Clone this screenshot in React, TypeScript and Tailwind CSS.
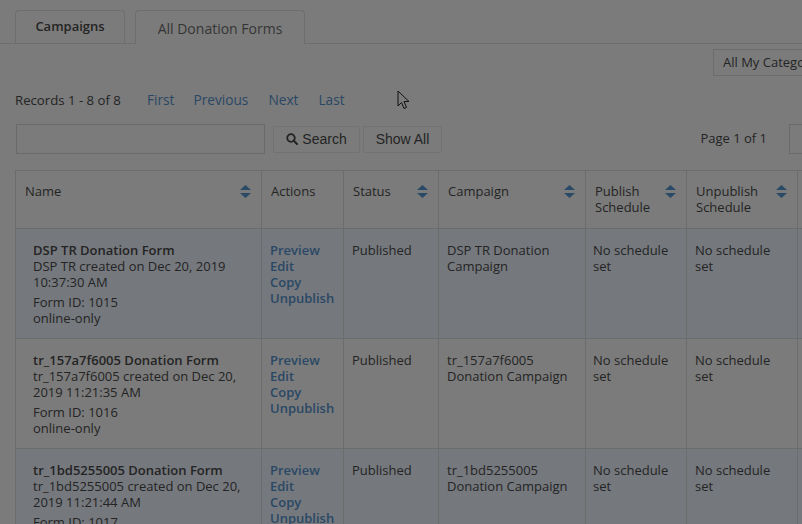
import React from "react";

const SortIcon = () => (
  <svg width="11" height="13" viewBox="0 0 11 13" className="shrink-0">
    <path d="M5.5 0 L11 5 L0 5 Z" fill="#2b4a68" />
    <path d="M0 8 L11 8 L5.5 13 Z" fill="#2b4a68" />
  </svg>
);

type Row = {
  title: string;
  created: string;
  formId: string;
  status: string;
  campaign: string;
  striped: boolean;
};

const rows: Row[] = [
  {
    title: "DSP TR Donation Form",
    created: "DSP TR created on Dec 20, 2019 10:37:30 AM",
    formId: "1015",
    status: "Published",
    campaign: "DSP TR Donation Campaign",
    striped: true,
  },
  {
    title: "tr_157a7f6005 Donation Form",
    created: "tr_157a7f6005 created on Dec 20, 2019 11:21:35 AM",
    formId: "1016",
    status: "Published",
    campaign: "tr_157a7f6005 Donation Campaign",
    striped: false,
  },
  {
    title: "tr_1bd5255005 Donation Form",
    created: "tr_1bd5255005 created on Dec 20, 2019 11:21:44 AM",
    formId: "1017",
    status: "Published",
    campaign: "tr_1bd5255005 Donation Campaign",
    striped: true,
  },
];

const HeadCell = ({
  label,
  sort,
  w,
  last,
}: {
  label: React.ReactNode;
  sort?: boolean;
  w: string;
  last?: boolean;
}) => (
  <th
    className={`${w} ${last ? "" : "border-r"} border-[#6c6c6c] align-top text-left font-normal px-[9px] pt-[12px] h-[58px]`}
  >
    <div className="flex items-start justify-between">
      <span className="leading-[16px]">{label}</span>
      {sort && (
        <span className="pt-[2px] pr-[1px]">
          <SortIcon />
        </span>
      )}
    </div>
  </th>
);

export default function App() {
  return (
    <div
      className="relative w-[802px] h-[524px] overflow-hidden bg-[#7b7b7b] text-[#242424] text-[13px]"
      style={{ fontFamily: '"Open Sans", "Liberation Sans", sans-serif' }}
    >
      {/* Tabs */}
      <div className="pt-[10px] pl-[15px] flex items-end border-b border-[#6e6e6e]">
        <div className="w-[110px] h-[33px] flex items-center justify-center border border-b-0 border-[#6e6e6e] rounded-t-[4px] font-semibold text-[13px] text-[#242424]">
          Campaigns
        </div>
        <div className="ml-[10px] w-[170px] h-[34px] -mb-px flex items-center justify-center border border-b-0 border-[#6e6e6e] rounded-t-[4px] bg-[#7b7b7b] text-[14px] text-[#353535] pt-[2px]">
          All Donation Forms
        </div>
      </div>

      {/* Category select */}
      <div className="flex justify-end mt-[5px]">
        <div className="w-[100px] -mr-[11px] h-[27px] border border-[#6c6c6c] flex items-center pl-[9px] pt-px text-[13px] whitespace-nowrap overflow-hidden">
          All My Categories
        </div>
      </div>

      {/* Records row */}
      <div className="flex items-center pl-[15px] mt-[14px] h-[20px] leading-[16px]">
        <span className="text-[13.2px]">Records 1 - 8 of 8</span>
        <span className="ml-[26px] text-[13.7px] text-[#2a4865]">First</span>
        <span className="ml-[19px] text-[13.7px] text-[#2a4865]">Previous</span>
        <span className="ml-[20px] text-[13.7px] text-[#2a4865]">Next</span>
        <span className="ml-[20px] text-[13.7px] text-[#2a4865]">Last</span>
      </div>

      {/* Search row */}
      <div className="flex items-center pl-[16px] mt-[14px] h-[30px]">
        <div className="w-[249px] h-[30px] border border-[#6a6a6a]" />
        <div
          className="ml-[8px] w-[87px] h-[27px] border border-[#727272] rounded-[2px] flex items-center justify-center gap-[4px] text-[14px] text-[#242424]"
          style={{ fontFamily: '"Liberation Sans", Arial, sans-serif' }}
        >
          <svg width="12" height="12" viewBox="0 0 12 12">
            <circle cx="5" cy="5" r="3.8" fill="none" stroke="#242424" strokeWidth="1.8" />
            <path d="M7.8 7.8 L11 11" stroke="#242424" strokeWidth="2" strokeLinecap="round" />
          </svg>
          Search
        </div>
        <div
          className="ml-[3px] w-[79px] h-[27px] border border-[#727272] rounded-[2px] flex items-center justify-center text-[14px] text-[#242424]"
          style={{ fontFamily: '"Liberation Sans", Arial, sans-serif' }}
        >
          Show All
        </div>
        <div className="flex-1" />
        <span className="text-[13px]">Page 1 of 1</span>
        <div className="ml-[22px] w-[13px] h-[30px] border border-[#6a6a6a] border-r-0 shrink-0" />
      </div>

      {/* Table */}
      <div className="pl-[15px] mt-[16px]">
        <table className="border-collapse table-fixed w-[900px] border-t border-l border-[#6c6c6c] leading-[16px]">
          <thead>
            <tr className="border-b border-[#6c6c6c]">
              <HeadCell label="Name" sort w="w-[246px]" />
              <HeadCell label="Actions" w="w-[82px]" />
              <HeadCell label="Status" sort w="w-[95px]" />
              <HeadCell label="Campaign" sort w="w-[147px]" />
              <HeadCell label={<>Publish<br />Schedule</>} sort w="w-[101px]" />
              <HeadCell label={<>Unpublish<br />Schedule</>} sort w="w-[111px]" />
              <HeadCell label="" w="w-[118px]" last />
            </tr>
          </thead>
          <tbody>
            {rows.map((r, i) => (
              <tr key={i} className={`${r.striped ? "bg-[#75787d]" : ""} border-b border-[#6c6c6c]`}>
                <td className="border-r border-[#6c6c6c] align-top h-[110px] pl-[17px] pr-[14px] pt-[13px]">
                  <div className="font-semibold">{r.title}</div>
                  <div>{r.created}</div>
                  <div className="mt-[4px]">Form ID: {r.formId}</div>
                  <div>online-only</div>
                </td>
                <td className="border-r border-[#6c6c6c] align-top px-[8px] pt-[13px] font-semibold text-[#2a4865]">
                  <div>Preview</div>
                  <div>Edit</div>
                  <div>Copy</div>
                  <div>Unpublish</div>
                </td>
                <td className="border-r border-[#6c6c6c] align-top px-[8px] pt-[13px]">{r.status}</td>
                <td className="border-r border-[#6c6c6c] align-top px-[8px] pt-[13px]">{r.campaign}</td>
                <td className="border-r border-[#6c6c6c] align-top px-[7px] pt-[13px]">No schedule set</td>
                <td className="border-r border-[#6c6c6c] align-top px-[8px] pt-[13px]">No schedule set</td>
                <td className="align-top px-[9px] pt-[13px]"></td>
              </tr>
            ))}
          </tbody>
        </table>
      </div>

      {/* Mouse cursor */}
      <svg
        className="absolute left-[397px] top-[90px]"
        width="14"
        height="21"
        viewBox="0 0 14 21"
      >
        <path
          d="M1 1 L1 16 L4.5 12.5 L7 18.5 L9.5 17.5 L7 11.5 L12 11.5 Z"
          fill="#7b7b7b"
          stroke="#111"
          strokeWidth="1"
          strokeLinejoin="round"
        />
      </svg>
    </div>
  );
}
